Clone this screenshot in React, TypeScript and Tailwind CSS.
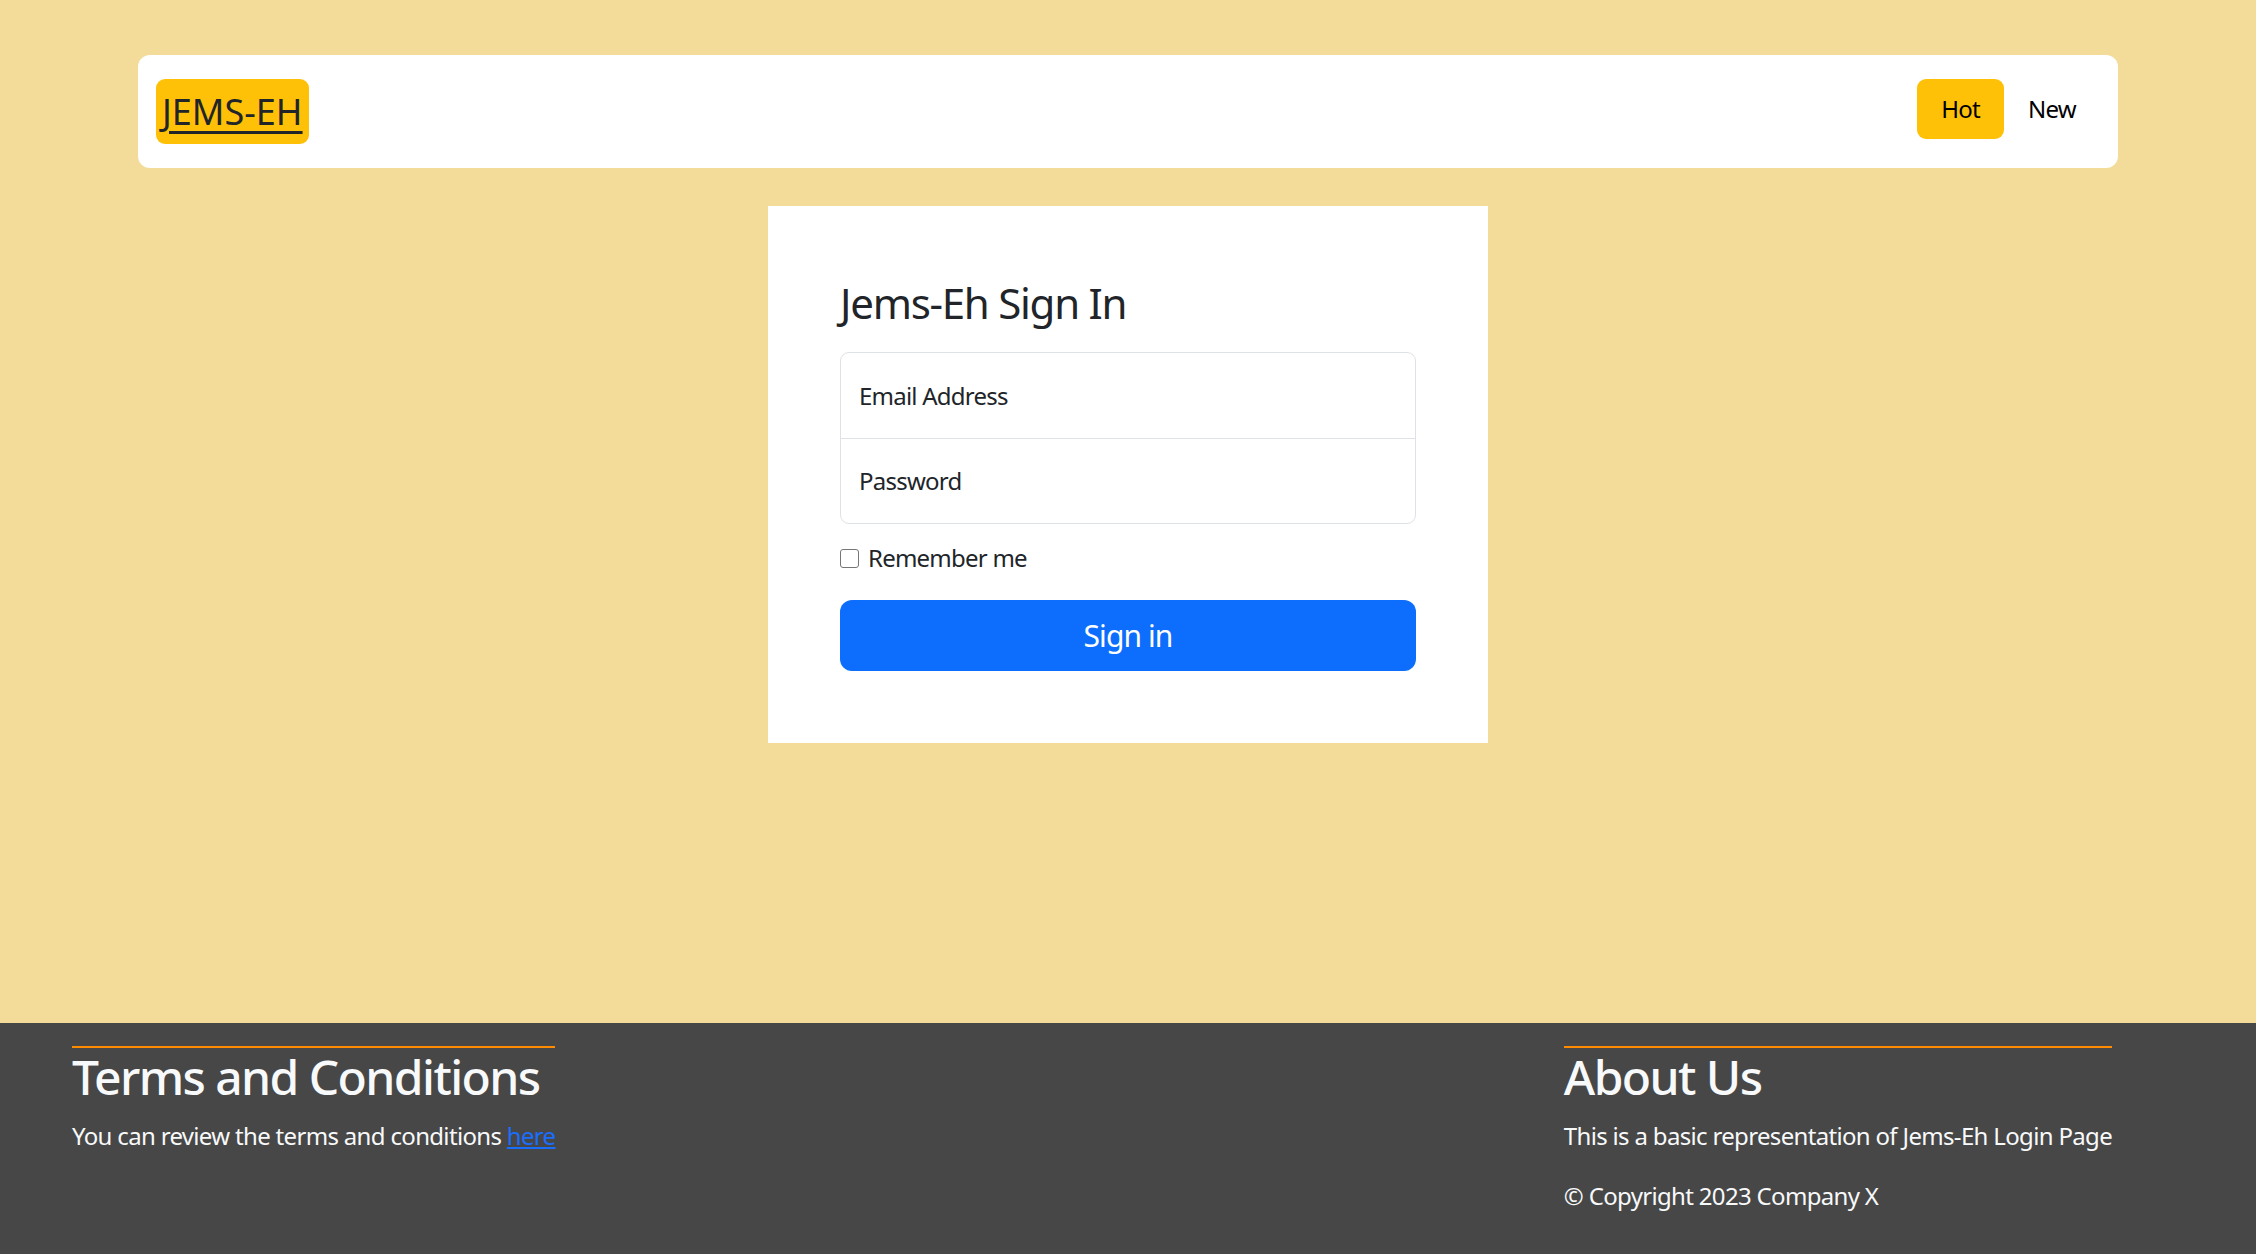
const FONT = "font-['Noto_Sans',sans-serif]";

function Navbar() {
  return (
    <div className="pt-[55px]">
      <nav className="mx-auto flex h-[113px] w-[1980px] items-start justify-between rounded-[12px] bg-white px-[18px] pt-[24px]">
        {/* Brand */}
        <a
          href="#"
          className="flex h-[65px] items-center rounded-[9px] bg-[#ffc107] px-[6px] text-[36px] leading-none text-[#212529] underline decoration-[3px] underline-offset-[6px]"
        >
          JEMS-EH
        </a>

        {/* Links */}
        <div className="flex items-center">
          <a
            href="#"
            className="flex h-[60px] items-center rounded-[9px] bg-[#ffc107] px-[24px] text-[24px] tracking-[-0.03em] text-black"
          >
            Hot
          </a>
          <a href="#" className="flex h-[60px] items-center px-[24px] text-[24px] tracking-[-0.03em] text-black">
            New
          </a>
        </div>
      </nav>
    </div>
  );
}

function SignInCard() {
  return (
    <div className="mx-auto mt-[38px] w-[720px] bg-white p-[72px]">
      <h3 className="mb-[24px] text-[42px] leading-[1.2] font-normal tracking-[-0.03em] text-[#212529]">
        Jems-Eh Sign In
      </h3>

      {/* Floating inputs */}
      <div className="rounded-[9px] border border-[#dee2e6]">
        <div className="flex h-[85px] items-center px-[18px] text-[24px] tracking-[-0.032em] text-[#212529]">
          Email Address
        </div>
        <div className="flex h-[85px] items-center border-t border-[#dee2e6] px-[18px] text-[24px] tracking-[-0.032em] text-[#212529]">
          Password
        </div>
      </div>

      <label className="mt-[16px] flex h-[36px] items-center gap-[9px] text-[24px] tracking-[-0.032em] text-[#212529]">
        <span className="h-[19px] w-[19px] rounded-[3px] border-[1.5px] border-[#767676] bg-white" />
        Remember me
      </label>

      <button className="mt-[24px] flex h-[71px] w-full items-center justify-center rounded-[12px] bg-[#0d6efd] text-[30px] tracking-[-0.03em] text-white">
        Sign in
      </button>
    </div>
  );
}

function Footer() {
  return (
    <footer className="flex h-[231px] justify-between bg-[#474747] pt-[23px] pr-[144px] pl-[72px] text-[#f8f9fa]">
      <div className="w-fit self-start border-t-2 border-[#ff8c00]">
        <h2 className="text-[48px] leading-[1.2] font-medium tracking-[-0.033em]">Terms and Conditions</h2>
        <p className="mt-[12px] text-[24px] leading-[1.5] tracking-[-0.028em]">
          You can review the terms and conditions{" "}
          <a href="#" className="text-[#1a6efd] underline">
            here
          </a>
        </p>
      </div>

      <div className="w-fit self-start border-t-2 border-[#ff8c00]">
        <h2 className="text-[48px] leading-[1.2] font-medium tracking-[-0.033em]">About Us</h2>
        <p className="mt-[12px] text-[24px] leading-[1.5] tracking-[-0.028em]">
          This is a basic representation of Jems-Eh Login Page
        </p>
        <p className="mt-[24px] text-[24px] leading-[1.5] tracking-[-0.028em]">© Copyright 2023 Company X</p>
      </div>
    </footer>
  );
}

export default function App() {
  return (
    <div className={`flex min-h-screen flex-col bg-[#f3dc9a] ${FONT}`}>
      <div className="flex-1">
        <Navbar />
        <SignInCard />
      </div>
      <Footer />
    </div>
  );
}
